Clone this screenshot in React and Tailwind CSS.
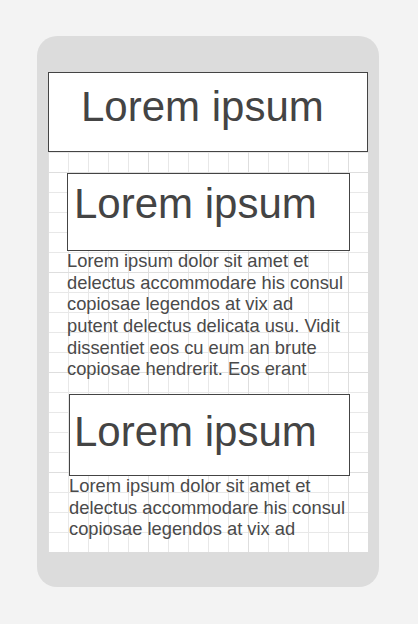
export default function App() {
  const para =
    'Lorem ipsum dolor sit amet et delectus accommodare his consul copiosae legendos at vix ad putent delectus delicata usu. Vidit dissentiet eos cu eum an brute copiosae hendrerit. Eos erant';
  const para2 = 'Lorem ipsum dolor sit amet et delectus accommodare his consul copiosae legendos at vix ad';

  return (
    <div className="min-h-[624px] bg-[#f3f3f3] pt-[36px] pl-[37px] font-['Liberation_Sans',Arial,sans-serif] text-[#444]">
      {/* Phone frame */}
      <div className="w-[342px] h-[551px] rounded-[20px] bg-[#dcdcdc] pt-[36px] px-[11px]">
        {/* Screen with grid */}
        <div className="w-[320px] h-[480px] bg-white bg-[linear-gradient(to_right,#dedede_1px,transparent_1px),linear-gradient(to_bottom,#dedede_1px,transparent_1px),linear-gradient(to_right,#e8e8e8_1px,transparent_1px),linear-gradient(to_bottom,#e8e8e8_1px,transparent_1px)] bg-[size:100px_100px,100px_100px,20px_20px,20px_20px]">
          <div className="h-[80px] border border-[#444] bg-white pl-[32px] pt-[10px] text-[42px] leading-[1.15]">
            Lorem ipsum
          </div>

          <section className="ml-[19px] mt-[21px]">
            <div className="w-[283px] h-[78px] border border-[#444] bg-white pl-[6px] pt-[6px] text-[42px] leading-[1.15]">
              Lorem ipsum
            </div>
            <p className="w-[280px] -mt-[1px] text-[18.33px] leading-[21.67px] text-[#4a4a4a]">{para}</p>
          </section>

          <section className="ml-[21px] mt-[14px]">
            <div className="w-[281px] h-[82px] border border-[#444] bg-white pl-[4px] pt-[13px] text-[42px] leading-[1.15]">
              Lorem ipsum
            </div>
            <p className="w-[280px] -mt-[1px] text-[18.33px] leading-[21.67px] text-[#4a4a4a]">{para2}</p>
          </section>
        </div>
      </div>
    </div>
  );
}
